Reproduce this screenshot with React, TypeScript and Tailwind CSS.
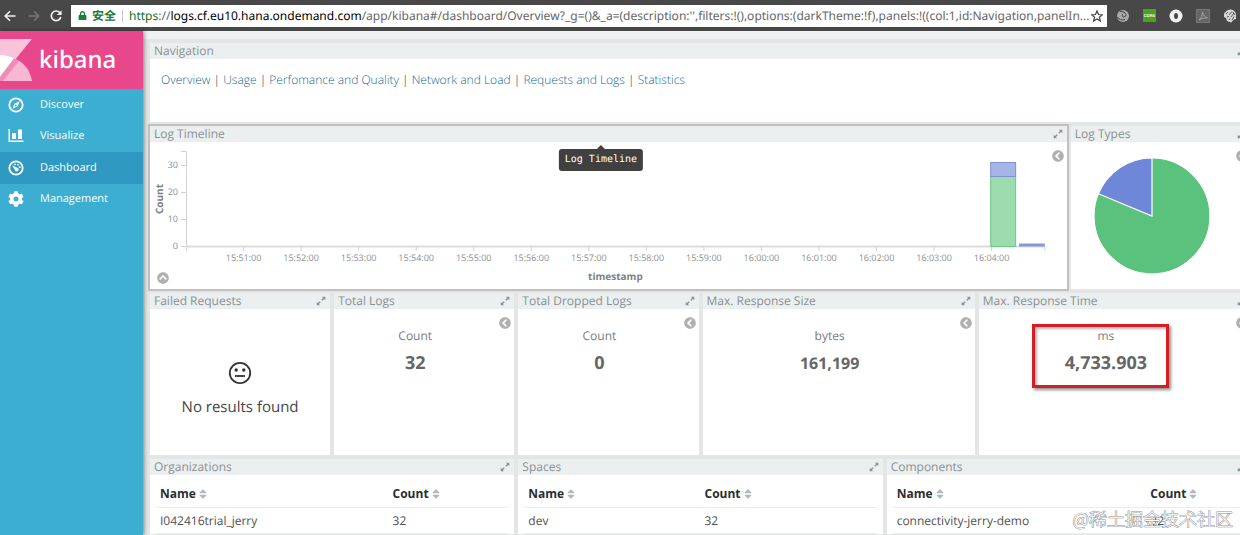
import React from "react";
import { FaChevronCircleLeft, FaChevronCircleUp, FaCog, FaLock, FaSort } from "react-icons/fa";

function ArrowIcon({ className }: { className: string }) {
  return (
    <svg viewBox="0 0 12 12" className={className} fill="none" stroke="currentColor" strokeWidth="1.6">
      <path d="M11.5 6H1.5M6 1.2L1.2 6L6 10.8" />
    </svg>
  );
}

function ReloadIcon() {
  return (
    <svg viewBox="0 0 12 12" className="size-3" fill="none" stroke="currentColor" strokeWidth="1.7">
      <path d="M10.2 3.2A4.8 4.8 0 1 0 10.8 7" />
      <path d="M11.6 0.3V5H6.9Z" fill="currentColor" stroke="none" />
    </svg>
  );
}

function ExpandIcon() {
  return (
    <svg viewBox="0 0 10 10" className="size-[10px]">
      <path
        d="M6 0.7H9.3V4L8.1 2.9L6.2 4.7L5.3 3.8L7.1 1.9ZM4 9.3H0.7V6L1.9 7.1L3.8 5.3L4.7 6.2L2.9 8.1Z"
        fill="currentColor"
      />
    </svg>
  );
}

function CompassIcon() {
  return (
    <svg viewBox="0 0 16 16" className="size-4">
      <circle cx="8" cy="8" r="6.7" fill="none" stroke="currentColor" strokeWidth="1.8" />
      <path d="M11.6 4.2L9.8 9.2L4.6 11.8L6.3 6.8ZM7.3 7.3L6.4 10L9 8.6Z" fill="currentColor" fillRule="evenodd" />
    </svg>
  );
}

function ChartIcon() {
  return (
    <svg viewBox="0 0 16 16" className="size-4" fill="currentColor">
      <path d="M0.5 1H2V12.5H15.5V14H0.5ZM4 5H8V11H4ZM10 1.5H14V11H10Z" />
    </svg>
  );
}

function GaugeIcon() {
  return (
    <svg viewBox="0 0 16 16" className="size-4" fill="currentColor">
      <circle cx="8" cy="8" r="6.7" fill="none" stroke="currentColor" strokeWidth="1.8" />
      <path d="M4 5.2L8.4 7.6A2 2 0 1 1 6.7 9.6Z" />
      <circle cx="7" cy="4.4" r="0.9" />
      <circle cx="10" cy="4.8" r="0.9" />
      <circle cx="11.8" cy="7.2" r="0.9" />
    </svg>
  );
}

function KibanaMark() {
  return (
    <svg viewBox="0 0 32 42" className="h-[42px] w-8">
      <path d="M0 0H32L0 39Z" fill="#f9c3da" />
      <path d="M0 16Q8 16 14 19.5L0 38Z" fill="#ffffff" />
      <path d="M14 19.5Q29 25 32 42H0V38Z" fill="#f8b7d3" />
      <path d="M14 19.5L19 22L3 42H0V38Z" fill="#ef8db8" />
    </svg>
  );
}

const MENU = [
  { label: "Discover", icon: <CompassIcon />, active: false },
  { label: "Visualize", icon: <ChartIcon />, active: false },
  { label: "Dashboard", icon: <GaugeIcon />, active: true },
  { label: "Management", icon: <FaCog className="size-4" />, active: false },
];

function BrowserBar() {
  return (
    <header className="flex h-[31px] shrink-0 items-center bg-[#484848] pl-1 text-[#f1f1f1]">
      <button aria-label="Back" className="flex w-6 items-center">
        <ArrowIcon className="size-3" />
      </button>
      <button aria-label="Forward" className="flex w-[22px] items-center text-[#777777]">
        <ArrowIcon className="size-3 rotate-180" />
      </button>
      <button aria-label="Reload" className="flex w-[21px] items-center">
        <ReloadIcon />
      </button>
      <div className="flex h-[22px] min-w-0 flex-1 items-center bg-white pr-1 pl-[7px] font-['Noto_Sans','Noto_Sans_CJK_SC',sans-serif] text-[12px] text-[#666666]">
        <FaLock className="size-[9px] shrink-0 text-[#188038]" />
        <span className="ml-[5px] shrink-0 font-bold text-[#188038]">安全</span>
        <span className="mx-[6px] h-3 w-px shrink-0 bg-[#cccccc]" />
        <div role="textbox" aria-label="Address" className="min-w-0 flex-1 overflow-hidden whitespace-nowrap">
          <span className="text-[#0b7028]">https</span>://
          <span className="text-black">logs.cf.eu10.hana.ondemand.com</span>
          /app/kibana#/dashboard/Overview?_g=()&amp;_a=(description:'',filters:!(),options:(darkTheme:!f),panels:!((col:1,id:Navigation,panelIn...
        </div>
        <button aria-label="Bookmark" className="shrink-0 text-[#444444]">
          <svg viewBox="0 0 12 12" className="size-3" fill="none" stroke="currentColor" strokeWidth="1.2">
            <path d="M6 0.9L7.5 4.5L11.4 4.8L8.4 7.3L9.4 11.1L6 9L2.6 11.1L3.6 7.3L0.6 4.8L4.5 4.5Z" />
          </svg>
        </button>
      </div>
      <div className="flex items-center gap-[13px] pr-[3px] pl-[9px]">
        <svg viewBox="0 0 14 14" className="size-[14px]">
          <circle cx="7" cy="7" r="6" fill="#a9a9a9" />
          <path d="M4 2.5Q9 2 10 5.5Q10 8 7.4 8Q5.2 7.4 6.6 5.2M1.5 8Q4 12 9 10.5" stroke="#484848" strokeWidth="1" fill="none" />
        </svg>
        <span className="flex size-[13px] items-center justify-center bg-[#4ea01e] font-['Liberation_Sans',sans-serif] text-[4px] font-bold text-white">
          CORS
        </span>
        <svg viewBox="0 0 14 14" className="size-[14px]">
          <circle cx="7" cy="7" r="6.5" fill="#f1f1f1" />
          <ellipse cx="7" cy="7" rx="2" ry="3" fill="#484848" />
        </svg>
        <svg viewBox="0 0 14 14" className="size-[14px]">
          <rect x="0.5" y="0.5" width="13" height="13" fill="#656565" stroke="#777777" />
          <path d="M3 11Q6.5 8 6.6 3Q7.5 8 11.5 8.8Q7 8.4 3 11" fill="none" stroke="#a5a5a5" />
        </svg>
        <svg viewBox="0 0 14 14" className="size-[14px]">
          <path d="M1 5Q3 0.5 8 0.5Q12 1 13 5V10L11 10.5L8 13.5L4 12L3 9L1 8Z" fill="#d6d6d6" />
          <path d="M3 5L5 3M6 6L9 2.5M4 8L6 7.5M8 8L11 4M9 11L11 7.5M6 11L7 9.5M10 3L12 6" stroke="#484848" strokeWidth="0.9" />
        </svg>
      </div>
    </header>
  );
}

function Sidebar() {
  return (
    <nav className="relative z-10 w-[143px] shrink-0 bg-[#3caed2] shadow-[1px_0_4px_rgba(0,0,0,0.45)]">
      <div className="flex h-[58px] items-center gap-[7px] bg-[#e8488b]">
        <KibanaMark />
        <span className="font-['Noto_Sans',sans-serif] text-[24px] leading-none font-medium text-white">kibana</span>
      </div>
      <ul className="grid h-[126px] grid-rows-4">
        {MENU.map((m) => (
          <li key={m.label} className={m.active ? "bg-[#2f99c1]" : ""}>
            <a href="#menu" className="flex h-full items-center gap-4 pl-2 text-[11px] text-white">
              {m.icon}
              {m.label}
            </a>
          </li>
        ))}
      </ul>
    </nav>
  );
}

type PanelProps = {
  title: string;
  span: string;
  focused?: boolean;
  tooltip?: string;
  children: React.ReactNode;
};

function Panel({ title, span, focused, tooltip, children }: PanelProps) {
  return (
    <section className={`flex flex-col bg-white ${span} ${focused ? "ring-2 ring-[#c0c0c0]" : ""}`}>
      <div className="flex h-4 shrink-0 items-center bg-[#ebefef] px-1 text-[#8a9192]">
        <h2 className="relative mr-[5px] flex-1 text-[12px] leading-4">
          {title}
          {tooltip && (
            <span
              role="tooltip"
              className="absolute top-[23px] left-1/2 z-20 -translate-x-1/2 rounded-[3px] bg-[#404040] px-[6px] font-['DejaVu_Sans_Mono',monospace] text-[10px] leading-[22px] font-normal whitespace-nowrap text-white"
            >
              <span className="absolute -top-1 left-1/2 size-0 -translate-x-1/2 border-x-4 border-b-4 border-x-transparent border-b-[#404040]" />
              {tooltip}
            </span>
          )}
        </h2>
        <button aria-label={`Expand ${title}`}>
          <ExpandIcon />
        </button>
      </div>
      {children}
    </section>
  );
}

function SideToggle() {
  return (
    <button aria-label="Toggle legend" className="mt-2 mr-[3px] self-start text-[#b0b0b0]">
      <FaChevronCircleLeft className="size-3" />
    </button>
  );
}

function Metric({ label, value, size, marked }: { label: string; value: string; size: string; marked?: boolean }) {
  return (
    <div className="flex flex-1">
      <div className="flex flex-1 flex-col items-center pt-[18px]">
        <div className="relative text-center">
          <p className="text-[12px] leading-[18px] text-[#7b7b7b]">{label}</p>
          <p className={`mt-1 leading-7 font-bold text-[#666666] ${size}`}>{value}</p>
          {marked && (
            <span className="absolute -top-[3px] -right-[22px] -bottom-[11px] -left-[33px] border-[3px] border-[#d31f24] shadow-[2px_2px_3px_rgba(0,0,0,0.45),inset_2px_2px_3px_rgba(0,0,0,0.3)]" />
          )}
        </div>
      </div>
      <div className="flex w-[18px] shrink-0 justify-end">
        <SideToggle />
      </div>
    </div>
  );
}

const TIMES = [
  "15:51:00", "15:52:00", "15:53:00", "15:54:00", "15:55:00", "15:56:00", "15:57:00",
  "15:58:00", "15:59:00", "16:00:00", "16:01:00", "16:02:00", "16:03:00", "16:04:00",
];

function Timeline() {
  return (
    <div className="flex flex-1">
      <div className="flex w-9 shrink-0 flex-col justify-between pt-[42px] pb-[5px] pl-1">
        <span className="rotate-180 text-[10px] leading-none font-bold text-[#7b8182] [writing-mode:vertical-rl]">Count</span>
        <button aria-label="Collapse" className="self-start pl-[3px] text-[#b0b0b0]">
          <FaChevronCircleUp className="size-3" />
        </button>
      </div>
      <div className="flex min-w-0 flex-1 flex-col items-center pt-[9px]">
        <svg className="h-[116px] w-full overflow-visible" fontSize="9" fill="#8b9091">
          <path d="M-5 .5H0.5V100M-5 14.5H0M-5 41.5H0M-5 68.5H0M-5 95.5H0" stroke="#d2d2d2" fill="none" />
          {[30, 20, 10, 0].map((n, i) => (
            <text key={n} x="-8" y={17 + i * 27} textAnchor="end">
              {n}
            </text>
          ))}
          <line x1="0" x2="100%" y1="95.5" y2="95.5" stroke="#dcdcdc" strokeWidth="2" />
          <line x1="100%" x2="100%" y1="95" y2="100" stroke="#d2d2d2" />
          {TIMES.map((t, i) => (
            <g key={t}>
              <line x1={`${6.7 + i * 6.7}%`} x2={`${6.7 + i * 6.7}%`} y1="96" y2="100" stroke="#d2d2d2" />
              <text x={`${6.7 + i * 6.7}%`} y="110" textAnchor="middle">
                {t}
              </text>
            </g>
          ))}
          <rect x="93.7%" y="25.5" width="2.9%" height="70" fill="#9bdbae" stroke="#6fc78c" />
          <rect x="93.7%" y="11.5" width="2.9%" height="14" fill="#a5b5e6" stroke="#7f8fd6" />
          <rect x="97%" y="92.5" width="3%" height="3" fill="#8797dd" />
        </svg>
        <p className="mt-[3px] text-[10px] leading-3 font-bold text-[#7b8182]">timestamp</p>
      </div>
      <div className="flex w-[22px] justify-end">
        <SideToggle />
      </div>
    </div>
  );
}

function LogTypes() {
  return (
    <div className="flex flex-1">
      <div className="flex flex-1 justify-center pt-[15px]">
        <svg viewBox="-59 -59 118 118" className="size-[118px]" stroke="#ffffff" strokeWidth="1.2">
          <circle r="58" fill="#5ac27d" />
          <path d="M0 0V-58A58 58 0 0 0 -53.6 -22.2Z" fill="#6f87d8" />
        </svg>
      </div>
      <div className="flex w-[18px] justify-end">
        <SideToggle />
      </div>
    </div>
  );
}

function CountTable({ name, nameWidth }: { name: string; nameWidth: string }) {
  return (
    <div className="px-[6px] pt-[6px]">
      <table className="w-full table-fixed border-collapse text-left text-[12px]">
        <thead>
          <tr className="h-[26px] border-b border-[#ececec] text-[#2d2d2d]">
            <th className={`px-1 pt-px font-bold ${nameWidth}`}>
              <button className="flex items-center gap-px">
                Name <FaSort className="size-3 text-[#b5b9ba]" />
              </button>
            </th>
            <th className="px-1 pt-px font-bold">
              <button className="flex items-center gap-px">
                Count <FaSort className="size-3 text-[#b5b9ba]" />
              </button>
            </th>
          </tr>
        </thead>
        <tbody>
          <tr className="h-[26px] border-b border-[#ececec] text-[#505050]">
            <td className="px-1 pt-px">{name}</td>
            <td className="px-1 pt-px">32</td>
          </tr>
        </tbody>
      </table>
    </div>
  );
}

const LINKS = ["Overview", "Usage", "Perfomance and Quality", "Network and Load", "Requests and Logs", "Statistics"];

export default function App() {
  return (
    <div className="relative flex h-screen flex-col overflow-hidden bg-[#e4e5e5] font-['Open_Sans',sans-serif] [text-rendering:geometricPrecision]">
      <BrowserBar />
      <div className="flex min-h-0 flex-1">
        <Sidebar />
        <main className="min-w-0 flex-1 overflow-hidden">
          <div className="h-2 bg-[#eff1f2]" />
          <div className="-mr-[11px] grid grid-cols-12 grid-rows-[79px_163px_162px_auto] gap-1 pt-1 pl-[7px]">
            <Panel title="Navigation" span="col-span-12">
              <p className="px-[11px] pt-[13px] text-[12px] leading-4 font-light text-[#222222]">
                {LINKS.map((l, i) => (
                  <React.Fragment key={l}>
                    {i > 0 && " | "}
                    <a href="#nav" className="text-[#16698f]">
                      {l}
                    </a>
                  </React.Fragment>
                ))}
              </p>
            </Panel>
            <Panel title="Log Timeline" span="col-span-10" focused tooltip="Log Timeline">
              <Timeline />
            </Panel>
            <Panel title="Log Types" span="col-span-2">
              <LogTypes />
            </Panel>
            <Panel title="Failed Requests" span="col-span-2">
              <div className="flex flex-1 flex-col items-center pt-[52px] text-[#333333]">
                <svg viewBox="0 0 24 24" className="size-6" fill="none" stroke="currentColor" strokeWidth="1.8">
                  <circle cx="12" cy="12" r="10.2" />
                  <path d="M7 15H17" />
                  <circle cx="8.2" cy="9" r="1.7" fill="currentColor" stroke="none" />
                  <circle cx="15.8" cy="9" r="1.7" fill="currentColor" stroke="none" />
                </svg>
                <p className="mt-3 text-[15px] leading-5 text-[#444444]">No results found</p>
              </div>
            </Panel>
            <Panel title="Total Logs" span="col-span-2">
              <Metric label="Count" value="32" size="text-[18px]" />
            </Panel>
            <Panel title="Total Dropped Logs" span="col-span-2">
              <Metric label="Count" value="0" size="text-[18px]" />
            </Panel>
            <Panel title="Max. Response Size" span="col-span-3">
              <Metric label="bytes" value="161,199" size="text-[16px]" />
            </Panel>
            <Panel title="Max. Response Time" span="col-span-3">
              <Metric label="ms" value="4,733.903" size="text-[18px]" marked />
            </Panel>
            <Panel title="Organizations" span="col-span-4">
              <CountTable name="I042416trial_jerry" nameWidth="w-[66%]" />
            </Panel>
            <Panel title="Spaces" span="col-span-4">
              <CountTable name="dev" nameWidth="w-[50%]" />
            </Panel>
            <Panel title="Components" span="col-span-4">
              <CountTable name="connectivity-jerry-demo" nameWidth="w-[72%]" />
            </Panel>
          </div>
        </main>
      </div>
      <span className="absolute right-[7px] bottom-1 font-['Noto_Sans_CJK_SC',sans-serif] text-[18px] leading-6 font-light text-white [-webkit-text-stroke:1px_#909090] [paint-order:stroke_fill]">
        @稀土掘金技术社区
      </span>
    </div>
  );
}
